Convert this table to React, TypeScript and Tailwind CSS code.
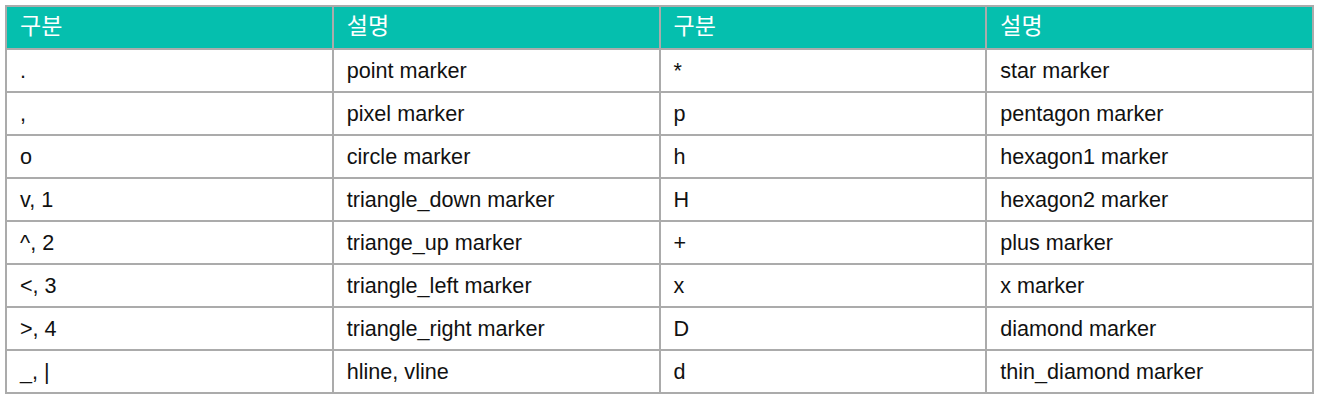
const rows: [string, string, string, string][] = [
  [".", "point marker", "*", "star marker"],
  [",", "pixel marker", "p", "pentagon marker"],
  ["o", "circle marker", "h", "hexagon1 marker"],
  ["v, 1", "triangle_down marker", "H", "hexagon2 marker"],
  ["^, 2", "triange_up marker", "+", "plus marker"],
  ["<, 3", "triangle_left marker", "x", "x marker"],
  [">, 4", "triangle_right marker", "D", "diamond marker"],
  ["_, |", "hline, vline", "d", "thin_diamond marker"],
];

const cell = "h-[43px] border-2 border-[#ababab] px-[13px] align-middle";

export default function App() {
  return (
    <div className="min-h-[402px] w-[1322px] bg-white pl-[5px] pt-[5px] font-['Liberation_Sans','Noto_Sans_CJK_KR',sans-serif] text-[21.6px] leading-none text-[#111]">
      <table className="w-[1309px] table-fixed border-collapse">
        <thead>
          <tr className="bg-[#05bfae] text-[23px] text-white">
            <th className={`${cell} pb-[3px] text-left font-normal`}>구분</th>
            <th className={`${cell} pb-[3px] text-left font-normal`}>설명</th>
            <th className={`${cell} pb-[3px] text-left font-normal`}>구분</th>
            <th className={`${cell} pb-[3px] text-left font-normal`}>설명</th>
          </tr>
        </thead>
        <tbody>
          {rows.map((r, i) => (
            <tr key={i}>
              {r.map((c, j) => (
                <td key={j} className={cell}>
                  {c}
                </td>
              ))}
            </tr>
          ))}
        </tbody>
      </table>
    </div>
  );
}
